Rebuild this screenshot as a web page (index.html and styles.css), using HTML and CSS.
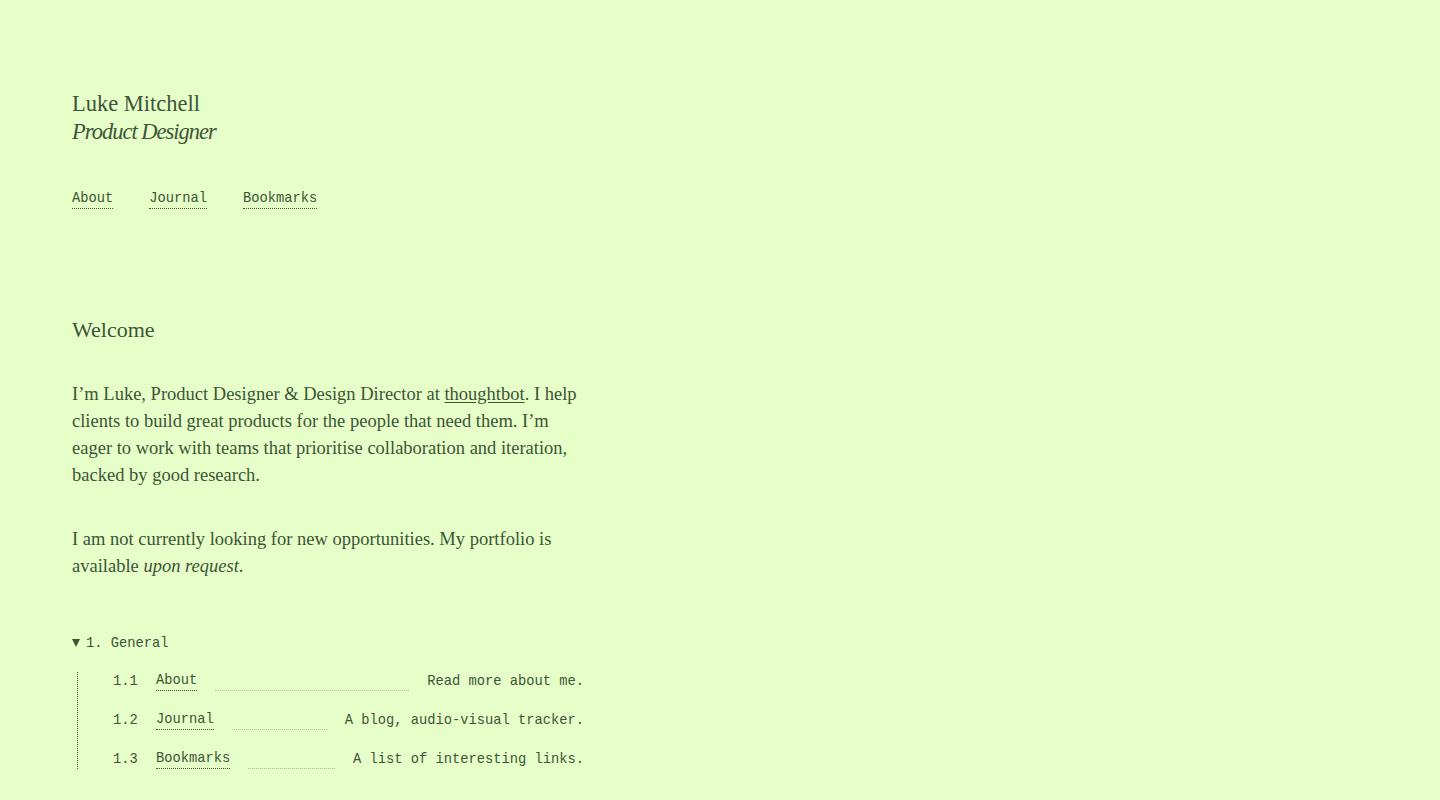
FILE: index.html
```html
<!DOCTYPE html>
<html lang="en">
<head>
<meta charset="utf-8">
<title>Luke Mitchell — Product Designer</title>
<link rel="stylesheet" href="styles.css">
</head>
<body>
<div class="page">
  <header class="masthead">
    <div class="name">Luke Mitchell</div>
    <div class="role">Product Designer</div>
  </header>
  <nav class="nav">
    <a class="link" href="#">About</a>
    <a class="link" href="#">Journal</a>
    <a class="link" href="#">Bookmarks</a>
  </nav>
  <main class="main">
    <h1 class="title">Welcome</h1>
    <p class="para">I’m Luke, Product Designer &amp; Design Director at <a class="inline" href="#">thoughtbot</a>. I help clients to build great products for the people that need them. I’m eager to work with teams that prioritise collaboration and iteration, backed by good research.</p>
    <p class="para">I am not currently looking for new opportunities. My portfolio is available <em>upon request</em>.</p>
    <section class="toc">
      <div class="toc-head"><span class="tri"></span>1. General</div>
      <ul class="toc-list">
        <li class="toc-row"><span class="num">1.1</span><a class="link" href="#">About</a><span class="leader"></span><span class="desc">Read more about me.</span></li>
        <li class="toc-row"><span class="num">1.2</span><a class="link" href="#">Journal</a><span class="leader"></span><span class="desc">A blog, audio-visual tracker.</span></li>
        <li class="toc-row"><span class="num">1.3</span><a class="link" href="#">Bookmarks</a><span class="leader"></span><span class="desc">A list of interesting links.</span></li>
      </ul>
    </section>
  </main>
</div>
</body>
</html>
```
FILE: styles.css
```css
html, body {
  margin: 0;
  padding: 0;
  background: #e6ffc9;
}
body {
  color: #3d5437;
  font-family: "Liberation Serif", "Times New Roman", serif;
}
.page {
  width: 512px;
  padding: 90px 72px 0;
}
.masthead {
  font-size: 22.5px;
  line-height: 28px;
}
.role {
  font-style: italic;
  letter-spacing: -1px;
}
.nav {
  margin-top: 44px;
  display: flex;
  gap: 36px;
  font-family: "Liberation Mono", "Courier New", monospace;
  font-size: 13.75px;
  line-height: 18px;
}
.link {
  display: inline-block;
  color: inherit;
  text-decoration: none;
  line-height: 18px;
  border-bottom: 1px dotted #3d5437;
}
.main {
  margin-top: 107px;
}
.title {
  margin: 0;
  font-weight: normal;
  font-size: 22px;
  line-height: 28px;
}
.para {
  margin: 37px 0 0;
  font-size: 18.5px;
  line-height: 27px;
}
.inline {
  color: inherit;
  text-decoration: underline;
  text-underline-offset: 2px;
}
.toc {
  margin-top: 54px;
  font-family: "Liberation Mono", "Courier New", monospace;
  font-size: 13.75px;
  line-height: 20px;
}
.toc-head {
  display: flex;
  align-items: center;
}
.tri {
  width: 0;
  height: 0;
  border-left: 4px solid transparent;
  border-right: 4px solid transparent;
  border-top: 8px solid #3d5437;
  margin-right: 6px;
  margin-top: -2px;
}
.toc-list {
  list-style: none;
  margin: 18px 0 0 5px;
  padding: 0 0 0 35px;
  border-left: 1px dotted #3d5437;
  display: flex;
  flex-direction: column;
  gap: 20px;
}
.toc-row {
  display: flex;
  align-items: flex-end;
  height: 19px;
}
.num {
  width: 43px;
  flex: none;
  line-height: 18px;
}
.toc-row .link {
  flex: none;
}
.leader {
  flex: 1;
  height: 0;
  margin: 0 18px;
  border-bottom: 1px dotted #a9c493;
}
.desc {
  flex: none;
  line-height: 18px;
}
```
